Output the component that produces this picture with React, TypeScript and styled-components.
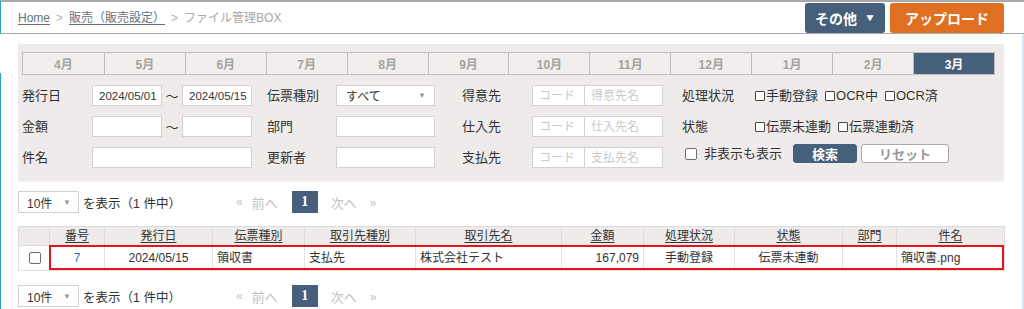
import React from "react";
import styled, { createGlobalStyle } from "styled-components";

const GlobalStyle = createGlobalStyle`
  html, body { margin: 0; padding: 0; background: #fff; }
  body {
    font-family: "Liberation Sans", "Noto Sans CJK JP", sans-serif;
    font-size: 13px;
    color: #333;
    overflow: hidden;
  }
  * { box-sizing: border-box; }
`;

const Page = styled.div`
  width: 1024px;
  height: 309px;
  display: flex;
  flex-direction: column;
  overflow: hidden;
`;

const TopBar = styled.header`
  height: 34px;
  flex: none;
  border-top: 2px solid #a9a9a9;
  border-bottom: 1px solid #a9a9a9;
  border-left: 1px solid #2ba3bc;
  display: flex;
  align-items: center;
  justify-content: space-between;
  padding: 0 20px 0 17px;
`;

const Crumbs = styled.nav`
  display: flex;
  align-items: center;
  font-size: 12px;
  line-height: 16px;
  color: #a8a8a8;
`;

const CrumbLink = styled.a`
  color: #66707c;
  text-decoration: underline;
  text-underline-offset: 2px;
`;

const CrumbSep = styled.span`
  margin: 0 6px;
  color: #b0b0b0;
`;

const HeaderActions = styled.div`
  align-self: flex-end;
  display: flex;
  gap: 5px;
`;

const HeaderButton = styled.button<{ $tone: "slate" | "orange"; $w: number }>`
  width: ${(p) => p.$w}px;
  height: 30px;
  border: none;
  border-radius: 3px;
  color: #fff;
  font-family: inherit;
  font-weight: bold;
  font-size: 14px;
  display: flex;
  align-items: center;
  justify-content: center;
  gap: 8px;
  padding: 0;
  background: ${(p) => (p.$tone === "slate" ? "#465f7b" : "#df6f21")};
`;

const Caret = styled.span`
  font-size: 10px;
  line-height: 1;
  transform: scaleX(1.2);
`;

const Main = styled.main`
  position: relative;
  flex: 1;
  padding: 10px 20px 0 18px;
  &::before {
    content: "";
    position: absolute;
    left: 0;
    top: 39px;
    bottom: 0;
    width: 1px;
    background: #2ba3bc;
  }
  &::after {
    content: "";
    position: absolute;
    right: 0;
    top: 0;
    bottom: 0;
    width: 2px;
    background: #d3e7f7;
  }
`;

const FilterPanel = styled.section`
  background: #efebea;
  padding: 8px 9px 13px 4px;
  border-bottom: 1px solid #f4f4f4;
`;

const MonthTabs = styled.div`
  display: grid;
  grid-template-columns: repeat(12, 1fr);
  border: 1px solid #bdbdbd;
  height: 23px;
`;

const MonthTab = styled.div<{ $active?: boolean }>`
  display: flex;
  align-items: center;
  justify-content: center;
  font-size: 12px;
  font-weight: bold;
  color: ${(p) => (p.$active ? "#fff" : "#a3a3a3")};
  background: ${(p) => (p.$active ? "#465f7b" : "#f1eeed")};
  & + & {
    border-left: 1px solid #bdbdbd;
  }
`;

const FilterRow = styled.div`
  display: flex;
  align-items: center;
  height: 21px;
  margin-top: 10px;
`;

const FieldLabel = styled.span<{ $w: number; $pl?: number }>`
  width: ${(p) => p.$w}px;
  padding-left: ${(p) => p.$pl ?? 0}px;
  flex: none;
  font-size: 13px;
  line-height: 16px;
  color: #333;
`;

const Field = styled.div<{ $w: number }>`
  width: ${(p) => p.$w}px;
  flex: none;
  display: flex;
  align-items: center;
`;

const TextInput = styled.input<{ $w: number }>`
  width: ${(p) => p.$w}px;
  height: 21px;
  flex: none;
  border: 1px solid #d2d2d2;
  background: #fff;
  font-family: inherit;
  font-size: 11.5px;
  color: #333;
  padding: 0 2px 0 6px;
  outline: none;
  & + & {
    margin-left: -1px;
  }
  &::placeholder {
    color: #c9c9c9;
    font-size: 12px;
  }
`;

const Tilde = styled.span`
  width: 20px;
  text-align: center;
  font-size: 13px;
  color: #333;
`;

const FakeSelect = styled.div<{ $w: number }>`
  width: ${(p) => p.$w}px;
  height: 21px;
  border: 1px solid #d2d2d2;
  background: #fff;
  display: flex;
  align-items: center;
  justify-content: space-between;
  padding: 0 8px 0 9px;
  font-size: 12px;
  color: #333;
`;

const SelectArrow = styled.span`
  font-size: 8px;
  color: #999;
`;

const CheckGroup = styled.div`
  display: flex;
  align-items: center;
  gap: 7px;
`;

const CheckItem = styled.label`
  display: inline-flex;
  align-items: center;
  gap: 1px;
  font-size: 13px;
  line-height: 16px;
  color: #333;
`;

const SmallBox = styled.span`
  width: 10px;
  height: 10px;
  border: 1px solid #444;
  border-radius: 1px;
  background: #fff;
  flex: none;
`;

const RoundBox = styled.span`
  display: block;
  width: 12px;
  height: 12px;
  border: 1px solid #6f6f6f;
  border-radius: 2px;
  background: #fff;
  flex: none;
`;

const Toggle = styled.label`
  margin-left: 22px;
  width: 108px;
  flex: none;
  display: inline-flex;
  align-items: center;
  gap: 7px;
  font-size: 13px;
  line-height: 16px;
  color: #333;
  align-self: flex-start;
  margin-top: -1px;
`;

const ActionButton = styled.button<{ $primary?: boolean; $w: number }>`
  width: ${(p) => p.$w}px;
  height: 19px;
  align-self: flex-start;
  margin-top: -3px;
  border-radius: 3px;
  font-family: inherit;
  font-size: 13px;
  font-weight: bold;
  padding: 0;
  display: flex;
  align-items: center;
  justify-content: center;
  border: 1px solid ${(p) => (p.$primary ? "#465f7b" : "#a9a9a9")};
  background: ${(p) => (p.$primary ? "#465f7b" : "#fff")};
  color: ${(p) => (p.$primary ? "#fff" : "#999")};
  & + & {
    margin-left: 4px;
  }
`;

const PagerBar = styled.div<{ $mt: number }>`
  display: flex;
  align-items: center;
  height: 22px;
  margin-top: ${(p) => p.$mt}px;
`;

const PagerLeft = styled.div`
  width: 218px;
  flex: none;
  display: flex;
  align-items: center;
  gap: 4px;
`;

const CountSelect = styled.div`
  width: 61px;
  height: 22px;
  border: 1px solid #d2d2d2;
  background: #fff;
  display: flex;
  align-items: center;
  justify-content: space-between;
  padding: 0 7px 0 8px;
  font-size: 12px;
  color: #333;
`;

const CountText = styled.span`
  font-size: 12.5px;
  color: #333;
`;

const PageNav = styled.div`
  display: flex;
  align-items: center;
  font-size: 13px;
  color: #c2c2c2;
`;

const NavArrow = styled.span`
  font-size: 12px;
`;

const NavText = styled.span<{ $ml: number }>`
  margin-left: ${(p) => p.$ml}px;
`;

const PageCurrent = styled.span`
  width: 26px;
  height: 22px;
  margin: 0 13px 0 14px;
  background: #465f7b;
  color: #fff;
  font-family: "Liberation Serif", serif;
  font-weight: bold;
  font-size: 14px;
  display: flex;
  align-items: center;
  justify-content: center;
`;

const TableWrap = styled.div`
  position: relative;
  margin-top: 13px;
`;

const Table = styled.table`
  width: 986px;
  border-collapse: collapse;
  table-layout: fixed;
  font-size: 12px;
`;

const HeadCell = styled.th`
  height: 19px;
  padding: 0;
  background: #efebea;
  border: 1px solid #dcdcdc;
  font-weight: normal;
  font-size: 12px;
  line-height: 16px;
  color: #333;
  text-align: center;
  text-decoration: underline;
  text-underline-offset: 2px;
`;

const Cell = styled.td<{ $align?: "left" | "center" | "right"; $link?: boolean }>`
  height: 25px;
  padding: 0 4px;
  border: 1px solid #e2e2e2;
  font-size: 12px;
  line-height: 16px;
  color: ${(p) => (p.$link ? "#2d6db5" : "#333")};
  text-align: ${(p) => p.$align ?? "left"};
  white-space: nowrap;
`;

const CheckCell = styled.td`
  height: 25px;
  padding: 0 0 0 10px;
  border: 1px solid #e2e2e2;
`;

const RowHighlight = styled.div`
  position: absolute;
  left: 31px;
  right: 0;
  top: 19px;
  height: 25px;
  border: 2px solid #e8141c;
  pointer-events: none;
`;

const months = ["4月", "5月", "6月", "7月", "8月", "9月", "10月", "11月", "12月", "1月", "2月", "3月"];

const columns: { label: string; w: number }[] = [
  { label: "", w: 31 },
  { label: "番号", w: 55 },
  { label: "発行日", w: 108 },
  { label: "伝票種別", w: 92 },
  { label: "取引先種別", w: 111 },
  { label: "取引先名", w: 146 },
  { label: "金額", w: 82 },
  { label: "処理状況", w: 91 },
  { label: "状態", w: 108 },
  { label: "部門", w: 54 },
  { label: "件名", w: 108 },
];

const Pager: React.FC<{ mt: number }> = ({ mt }) => (
  <PagerBar $mt={mt}>
    <PagerLeft>
      <CountSelect>
        <span>10件</span>
        <SelectArrow>▼</SelectArrow>
      </CountSelect>
      <CountText>を表示（1 件中）</CountText>
    </PagerLeft>
    <PageNav>
      <NavArrow>«</NavArrow>
      <NavText $ml={9}>前へ</NavText>
      <PageCurrent>1</PageCurrent>
      <span>次へ</span>
      <NavText $ml={13}>
        <NavArrow>»</NavArrow>
      </NavText>
    </PageNav>
  </PagerBar>
);

export default function App() {
  return (
    <>
      <GlobalStyle />
      <Page>
        <TopBar>
          <Crumbs>
            <CrumbLink>Home</CrumbLink>
            <CrumbSep>&gt;</CrumbSep>
            <CrumbLink>販売（販売設定）</CrumbLink>
            <CrumbSep>&gt;</CrumbSep>
            <span>ファイル管理BOX</span>
          </Crumbs>
          <HeaderActions>
            <HeaderButton $tone="slate" $w={80}>
              その他<Caret>▼</Caret>
            </HeaderButton>
            <HeaderButton $tone="orange" $w={114}>
              アップロード
            </HeaderButton>
          </HeaderActions>
        </TopBar>
        <Main>
          <FilterPanel>
            <MonthTabs>
              {months.map((m) => (
                <MonthTab key={m} $active={m === "3月"}>
                  {m}
                </MonthTab>
              ))}
            </MonthTabs>

            <FilterRow>
              <FieldLabel $w={70}>発行日</FieldLabel>
              <Field $w={160}>
                <TextInput $w={70} defaultValue="2024/05/01" />
                <Tilde>〜</Tilde>
                <TextInput $w={70} defaultValue="2024/05/15" />
              </Field>
              <FieldLabel $w={84} $pl={15}>伝票種別</FieldLabel>
              <Field $w={99}>
                <FakeSelect $w={99}>
                  <span>すべて</span>
                  <SelectArrow>▼</SelectArrow>
                </FakeSelect>
              </Field>
              <FieldLabel $w={97} $pl={27}>得意先</FieldLabel>
              <Field $w={131}>
                <TextInput $w={53} placeholder="コード" />
                <TextInput $w={79} placeholder="得意先名" />
              </Field>
              <FieldLabel $w={92} $pl={19}>処理状況</FieldLabel>
              <CheckGroup>
                <CheckItem><SmallBox />手動登録</CheckItem>
                <CheckItem><SmallBox />OCR中</CheckItem>
                <CheckItem><SmallBox />OCR済</CheckItem>
              </CheckGroup>
            </FilterRow>

            <FilterRow>
              <FieldLabel $w={70}>金額</FieldLabel>
              <Field $w={160}>
                <TextInput $w={70} />
                <Tilde>〜</Tilde>
                <TextInput $w={70} />
              </Field>
              <FieldLabel $w={84} $pl={15}>部門</FieldLabel>
              <Field $w={99}>
                <TextInput $w={99} />
              </Field>
              <FieldLabel $w={97} $pl={27}>仕入先</FieldLabel>
              <Field $w={131}>
                <TextInput $w={53} placeholder="コード" />
                <TextInput $w={79} placeholder="仕入先名" />
              </Field>
              <FieldLabel $w={92} $pl={19}>状態</FieldLabel>
              <CheckGroup>
                <CheckItem><SmallBox />伝票未連動</CheckItem>
                <CheckItem><SmallBox />伝票連動済</CheckItem>
              </CheckGroup>
            </FilterRow>

            <FilterRow>
              <FieldLabel $w={70}>件名</FieldLabel>
              <Field $w={160}>
                <TextInput $w={160} />
              </Field>
              <FieldLabel $w={84} $pl={15}>更新者</FieldLabel>
              <Field $w={99}>
                <TextInput $w={99} />
              </Field>
              <FieldLabel $w={97} $pl={27}>支払先</FieldLabel>
              <Field $w={131}>
                <TextInput $w={53} placeholder="コード" />
                <TextInput $w={79} placeholder="支払先名" />
              </Field>
              <Toggle><RoundBox />非表示も表示</Toggle>
              <ActionButton $primary $w={64}>検索</ActionButton>
              <ActionButton $w={88}>リセット</ActionButton>
            </FilterRow>
          </FilterPanel>

          <Pager mt={9} />

          <TableWrap>
            <Table>
              <colgroup>
                {columns.map((c, i) => (
                  <col key={i} style={{ width: c.w }} />
                ))}
              </colgroup>
              <thead>
                <tr>
                  {columns.map((c, i) => (
                    <HeadCell key={i}>{c.label}</HeadCell>
                  ))}
                </tr>
              </thead>
              <tbody>
                <tr>
                  <CheckCell><RoundBox /></CheckCell>
                  <Cell $align="center" $link>7</Cell>
                  <Cell $align="center">2024/05/15</Cell>
                  <Cell>領収書</Cell>
                  <Cell>支払先</Cell>
                  <Cell>株式会社テスト</Cell>
                  <Cell $align="right">167,079</Cell>
                  <Cell $align="center">手動登録</Cell>
                  <Cell $align="center">伝票未連動</Cell>
                  <Cell></Cell>
                  <Cell>領収書.png</Cell>
                </tr>
              </tbody>
            </Table>
            <RowHighlight />
          </TableWrap>

          <Pager mt={14} />
        </Main>
      </Page>
    </>
  );
}
